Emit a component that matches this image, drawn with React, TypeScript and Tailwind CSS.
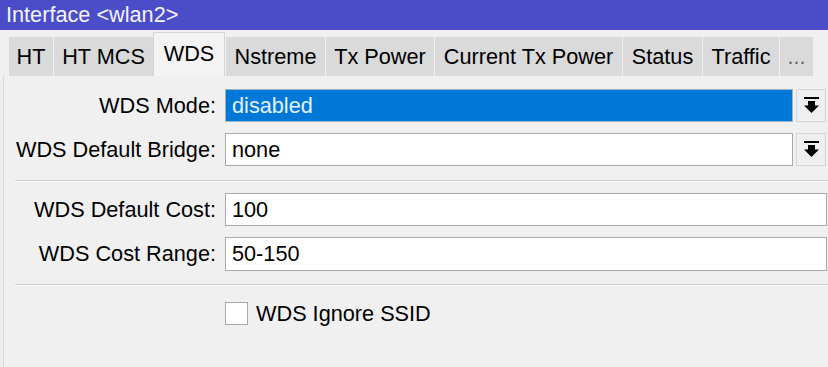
import React from "react";

const tabs: { label: string; w: number; active?: boolean }[] = [
  { label: "HT", w: 45 },
  { label: "HT MCS", w: 100 },
  { label: "WDS", w: 72, active: true },
  { label: "Nstreme", w: 100 },
  { label: "Tx Power", w: 109 },
  { label: "Current Tx Power", w: 188 },
  { label: "Status", w: 80 },
  { label: "Traffic", w: 77 },
  { label: "...", w: 34 },
];

function DropIcon() {
  return (
    <svg width="15" height="17" viewBox="0 0 15 17">
      <rect x="0" y="0" width="15" height="2" fill="#000" />
      <rect x="4" y="4" width="7" height="5" fill="#000" />
      <polygon points="0,8.5 15,8.5 7.5,16" fill="#000" />
    </svg>
  );
}

function Separator({ className }: { className: string }) {
  return (
    <div className={`ml-[11px] flex flex-col ${className}`}>
      <div className="h-px bg-[#cdcdcd]" />
      <div className="h-px bg-[#fafafa]" />
    </div>
  );
}

export default function App() {
  const font = { fontFamily: '"Liberation Sans", Arial, sans-serif' };
  return (
    <div
      className="w-[828px] h-[367px] bg-[#f0f0f0] flex flex-col overflow-hidden text-[21.7px] leading-none text-black"
      style={font}
    >
      <div className="h-[30px] bg-[#4b4dc8] text-[#f4f4ff] flex items-center pl-[6px] shrink-0">
        Interface &lt;wlan2&gt;
      </div>
      <div className="flex items-end pl-[8px] pt-[2px] h-[46px] shrink-0">
        {tabs.map((t) =>
          t.active ? (
            <div
              key={t.label}
              className="h-[44px] bg-[#f3f3f3] border-t border-l border-r border-[#d4d4d4] flex items-center justify-center pb-[1px]"
              style={{ width: t.w }}
            >
              {t.label}
            </div>
          ) : (
            <div
              key={t.label}
              className="h-[39px] bg-[#dadada] border-l border-[#f2f2f2] flex items-center justify-center"
              style={{ width: t.w }}
            >
              <span className={t.label === "..." ? "text-[#666]" : ""}>{t.label}</span>
            </div>
          )
        )}
      </div>
      <div className="flex-1 ml-[3px] border-l border-[#d8d8d8] flex flex-col pt-[13px]">
        <div className="flex items-center h-[33px]">
          <div className="w-[212px] text-right">WDS Mode:</div>
          <div className="ml-[9px] flex-1 h-full bg-[#0078d7] border border-[#9db0c4] flex items-center pl-[6px] text-[#e4f0ff]">
            disabled
          </div>
          <div className="ml-[3px] mr-[2px] w-[30px] h-full bg-[#efefef] border border-[#d6d6d6] flex items-center justify-center">
            <DropIcon />
          </div>
        </div>
        <div className="flex items-center h-[33px] mt-[11px]">
          <div className="w-[212px] text-right">WDS Default Bridge:</div>
          <div className="ml-[9px] flex-1 h-full bg-white border border-[#a9a9a9] flex items-center pl-[6px]">
            none
          </div>
          <div className="ml-[3px] mr-[2px] w-[30px] h-full bg-[#efefef] border border-[#d6d6d6] flex items-center justify-center">
            <DropIcon />
          </div>
        </div>
        <Separator className="mt-[14px]" />
        <div className="flex items-center h-[33px] mt-[11px]">
          <div className="w-[212px] text-right">WDS Default Cost:</div>
          <div className="ml-[9px] mr-[1px] flex-1 h-full bg-white border border-[#a9a9a9] flex items-center pl-[6px]">
            100
          </div>
        </div>
        <div className="flex items-center h-[34px] mt-[11px]">
          <div className="w-[212px] text-right">WDS Cost Range:</div>
          <div className="ml-[9px] mr-[1px] flex-1 h-full bg-white border border-[#a9a9a9] flex items-center pl-[6px]">
            50-150
          </div>
        </div>
        <Separator className="mt-[13px]" />
        <div className="flex items-center mt-[16px] ml-[221px]">
          <div className="w-[23px] h-[23px] bg-white border border-[#a9a9a9]" />
          <div className="ml-[8px]">WDS Ignore SSID</div>
        </div>
      </div>
    </div>
  );
}
